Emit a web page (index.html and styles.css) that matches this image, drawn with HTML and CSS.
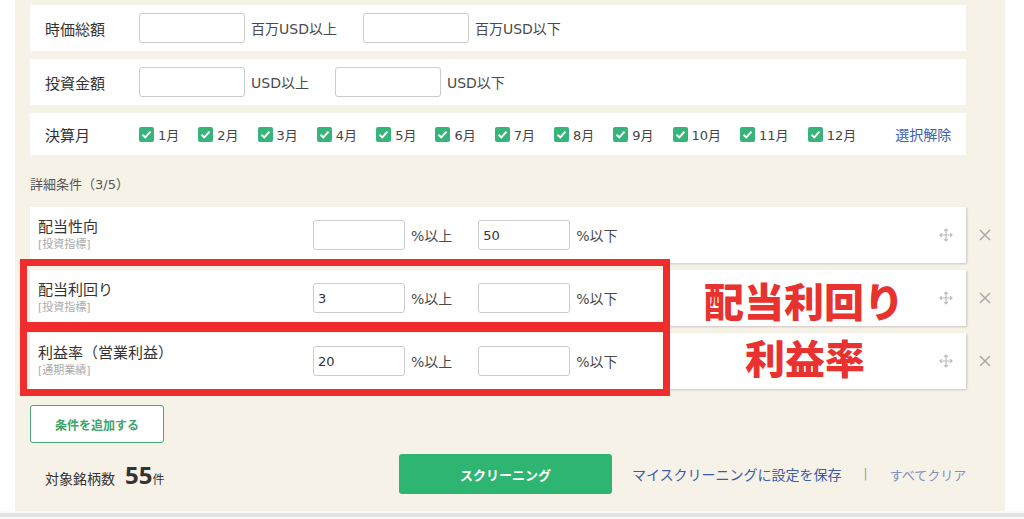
FILE: index.html
```html
<!DOCTYPE html>
<html lang="ja">
<head>
<meta charset="utf-8">
<title>スクリーニング条件</title>
<link rel="stylesheet" href="styles.css">
</head>
<body>
<div class="panel">
  <div class="row">
    <div class="label">時価総額</div>
    <input class="inp wide" type="text">
    <span class="unit">百万USD以上</span>
    <input class="inp wide" type="text">
    <span class="unit">百万USD以下</span>
  </div>
  <div class="row">
    <div class="label">投資金額</div>
    <input class="inp wide" type="text">
    <span class="unit">USD以上</span>
    <input class="inp wide" type="text">
    <span class="unit">USD以下</span>
  </div>
  <div class="row row-month">
    <div class="label">決算月</div>
    <div class="months">
      <label class="month"><span class="cb"><svg viewBox="0 0 15 15"><path d="M3.5 7.8 L6.3 10.4 L11.5 4.6" /></svg></span>1月</label>
      <label class="month"><span class="cb"><svg viewBox="0 0 15 15"><path d="M3.5 7.8 L6.3 10.4 L11.5 4.6" /></svg></span>2月</label>
      <label class="month"><span class="cb"><svg viewBox="0 0 15 15"><path d="M3.5 7.8 L6.3 10.4 L11.5 4.6" /></svg></span>3月</label>
      <label class="month"><span class="cb"><svg viewBox="0 0 15 15"><path d="M3.5 7.8 L6.3 10.4 L11.5 4.6" /></svg></span>4月</label>
      <label class="month"><span class="cb"><svg viewBox="0 0 15 15"><path d="M3.5 7.8 L6.3 10.4 L11.5 4.6" /></svg></span>5月</label>
      <label class="month"><span class="cb"><svg viewBox="0 0 15 15"><path d="M3.5 7.8 L6.3 10.4 L11.5 4.6" /></svg></span>6月</label>
      <label class="month"><span class="cb"><svg viewBox="0 0 15 15"><path d="M3.5 7.8 L6.3 10.4 L11.5 4.6" /></svg></span>7月</label>
      <label class="month"><span class="cb"><svg viewBox="0 0 15 15"><path d="M3.5 7.8 L6.3 10.4 L11.5 4.6" /></svg></span>8月</label>
      <label class="month"><span class="cb"><svg viewBox="0 0 15 15"><path d="M3.5 7.8 L6.3 10.4 L11.5 4.6" /></svg></span>9月</label>
      <label class="month"><span class="cb"><svg viewBox="0 0 15 15"><path d="M3.5 7.8 L6.3 10.4 L11.5 4.6" /></svg></span>10月</label>
      <label class="month"><span class="cb"><svg viewBox="0 0 15 15"><path d="M3.5 7.8 L6.3 10.4 L11.5 4.6" /></svg></span>11月</label>
      <label class="month"><span class="cb"><svg viewBox="0 0 15 15"><path d="M3.5 7.8 L6.3 10.4 L11.5 4.6" /></svg></span>12月</label>
    </div>
    <a class="deselect">選択解除</a>
  </div>

  <div class="heading">詳細条件（3/5）</div>

  <div class="drow">
    <div class="dcard">
      <div class="dlabel"><div class="dname">配当性向</div><div class="dsub">[投資指標]</div></div>
      <input class="inp narrow" type="text">
      <span class="unit">%以上</span>
      <input class="inp narrow" type="text" value="50">
      <span class="unit">%以下</span>
      <svg class="move" viewBox="0 0 14 14"><path d="M7 1 V13 M1 7 H13 M5.2 2.8 L7 1 L8.8 2.8 M5.2 11.2 L7 13 L8.8 11.2 M2.8 5.2 L1 7 L2.8 8.8 M11.2 5.2 L13 7 L11.2 8.8"/></svg>
    </div>
    <svg class="remove" viewBox="0 0 12 12"><path d="M1 1 L11 11 M11 1 L1 11"/></svg>
  </div>
  <div class="drow">
    <div class="dcard">
      <div class="dlabel"><div class="dname">配当利回り</div><div class="dsub">[投資指標]</div></div>
      <input class="inp narrow" type="text" value="3">
      <span class="unit">%以上</span>
      <input class="inp narrow" type="text">
      <span class="unit">%以下</span>
      <svg class="move" viewBox="0 0 14 14"><path d="M7 1 V13 M1 7 H13 M5.2 2.8 L7 1 L8.8 2.8 M5.2 11.2 L7 13 L8.8 11.2 M2.8 5.2 L1 7 L2.8 8.8 M11.2 5.2 L13 7 L11.2 8.8"/></svg>
    </div>
    <svg class="remove" viewBox="0 0 12 12"><path d="M1 1 L11 11 M11 1 L1 11"/></svg>
  </div>
  <div class="drow">
    <div class="dcard">
      <div class="dlabel"><div class="dname">利益率（営業利益）</div><div class="dsub">[通期業績]</div></div>
      <input class="inp narrow" type="text" value="20">
      <span class="unit">%以上</span>
      <input class="inp narrow" type="text">
      <span class="unit">%以下</span>
      <svg class="move" viewBox="0 0 14 14"><path d="M7 1 V13 M1 7 H13 M5.2 2.8 L7 1 L8.8 2.8 M5.2 11.2 L7 13 L8.8 11.2 M2.8 5.2 L1 7 L2.8 8.8 M11.2 5.2 L13 7 L11.2 8.8"/></svg>
    </div>
    <svg class="remove" viewBox="0 0 12 12"><path d="M1 1 L11 11 M11 1 L1 11"/></svg>
  </div>

  <button class="add-btn">条件を追加する</button>

  <div class="result">
    <div class="count">対象銘柄数<span class="num">55</span><span class="ken">件</span></div>
    <button class="screen-btn">スクリーニング</button>
    <a class="save">マイスクリーニングに設定を保存</a>
    <span class="sep">|</span>
    <a class="clear">すべてクリア</a>
  </div>
</div>
<div class="page-rule"></div>

<div class="hl hl-1"></div>
<div class="hl hl-2"></div>
<div class="note note-1">配当利回り</div>
<div class="note note-2">利益率</div>
</body>
</html>
```

FILE: styles.css
```css
* { box-sizing: border-box; }
html, body { margin: 0; padding: 0; }
body {
  background: #fafafa;
  font-family: "DejaVu Sans", "Noto Sans CJK JP", sans-serif;
  color: #333;
  width: 1024px;
  height: 519px;
  overflow: hidden;
  position: relative;
}
.panel {
  margin-left: 15px;
  width: 990px;
  height: 511px;
  background: #f6f2e8;
  padding: 5px 39px 0 15px;
  box-shadow: -15px 0 0 #fff, 19px 0 0 #fff;
}
.row {
  background: #fff;
  height: 46px;
  display: flex;
  align-items: center;
  padding-left: 15px;
  margin-bottom: 8px;
  font-size: 13px;
}
.row-month { height: 42px; margin-bottom: 0; }
.label {
  width: 94px;
  font-size: 15px;
  color: #333;
}
.inp {
  height: 30px;
  border: 1px solid #ccc;
  border-radius: 3px;
  background: #fff;
  font-family: "DejaVu Sans", "Noto Sans CJK JP", sans-serif;
  font-size: 13px;
  color: #333;
  padding: 0 4px;
  outline: none;
  margin: 0;
  flex-shrink: 0;
}
.wide { width: 106px; }
.narrow { width: 92px; }
.unit {
  font-size: 14px;
  color: #4a4a4a;
  margin: 0 26px 0 6px;
  white-space: nowrap;
}
.months { display: flex; align-items: center; }
.month {
  display: flex;
  align-items: center;
  font-size: 13px;
  color: #444;
  margin-right: 19px;
}
.cb {
  width: 15px;
  height: 15px;
  background: #37b47a;
  border-radius: 2px;
  margin-right: 4px;
  display: inline-flex;
}
.cb svg { width: 15px; height: 15px; fill: none; stroke: #fff; stroke-width: 2; }
.deselect {
  margin-left: 20px;
  font-size: 14px;
  color: #3d5fb2;
}
.heading {
  font-size: 13px;
  color: #555;
  line-height: 20px;
  margin: 20px 0 12px;
}
.drow {
  display: flex;
  align-items: center;
  margin-bottom: 7px;
}
.dcard {
  flex-shrink: 0;
  width: 936px;
  height: 56px;
  background: #fff;
  display: flex;
  align-items: center;
  padding-left: 8px;
  box-shadow: 1px 1px 2px rgba(0,0,0,0.18);
}
.dlabel { width: 275px; }
.dname { font-size: 15px; color: #333; line-height: 19px; }
.dsub { font-size: 11px; color: #aaa; line-height: 16px; }
.move {
  width: 14px;
  height: 14px;
  margin-left: auto;
  margin-right: 13px;
  fill: none;
  stroke: #bbb;
  stroke-width: 1.2;
}
.remove {
  flex-shrink: 0;
  width: 12px;
  height: 12px;
  margin-left: 13px;
  fill: none;
  stroke: #aaa;
  stroke-width: 1.5;
}
.add-btn {
  display: block;
  margin-top: 16px;
  width: 134px;
  height: 38px;
  background: #fff;
  border: 1.5px solid #4aa878;
  border-radius: 3px;
  color: #3ea36c;
  font-family: "Noto Sans CJK JP", sans-serif;
  font-size: 12px;
  font-weight: bold;
  padding: 0;
}
.result {
  display: flex;
  align-items: center;
  margin-top: 11px;
  padding-left: 15px;
  height: 40px;
}
.result > * { flex-shrink: 0; white-space: nowrap; }
.count {
  width: 354px;
  font-size: 14px;
  color: #333;
  display: flex;
  align-items: baseline;
}
.num {
  font-family: "Noto Sans", sans-serif;
  font-size: 24px;
  font-weight: bold;
  color: #333;
  margin-left: 10px;
}
.ken { font-size: 12px; }
.screen-btn {
  width: 213px;
  height: 40px;
  background: #2eb572;
  border: none;
  border-radius: 3px;
  color: #fff;
  font-family: "Noto Sans CJK JP", sans-serif;
  font-size: 13px;
  font-weight: bold;
  padding: 0;
}
.save {
  margin-left: 20px;
  font-size: 14px;
  color: #3b5ba8;
}
.sep {
  margin: 0 22px;
  font-size: 12px;
  color: #999;
}
.clear {
  font-size: 13px;
  color: #7d8fbf;
}
.page-rule {
  margin-top: 2px;
  height: 4px;
  background: #e2e2e2;
}
.hl {
  position: absolute;
  left: 20px;
  width: 650px;
  border: 7px solid #f02d2d;
}
.hl-1 { top: 259px; height: 70px; }
.hl-2 { top: 325px; height: 71px; }
.note {
  position: absolute;
  font-family: "Noto Sans CJK JP", sans-serif;
  font-size: 40px;
  line-height: 40px;
  font-weight: 900;
  color: #e8322f;
}
.note-1 { left: 704px; top: 280px; }
.note-2 { left: 745px; top: 337px; }
```
